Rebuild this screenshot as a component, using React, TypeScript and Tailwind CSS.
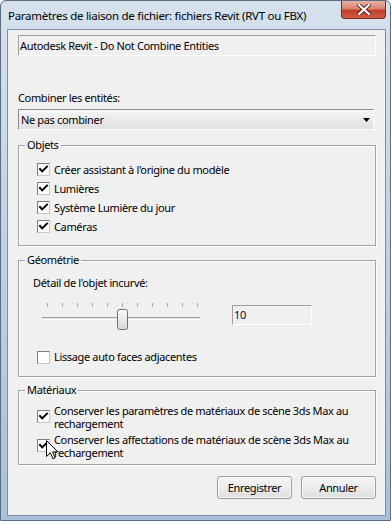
import React from "react";

function CheckMark() {
  return (
    <svg width="11" height="11" viewBox="0 0 11 11" className="block">
      <path d="M2 5 L4.2 7.4 L9 2.6" stroke="#000" strokeWidth="2" fill="none" strokeLinecap="square" />
    </svg>
  );
}

function CheckBox({ checked }: { checked: boolean }) {
  return (
    <div className="w-[13px] h-[13px] shrink-0 bg-white border border-t-[#7f7f7f] border-l-[#7f7f7f] border-r-[#c8c8c8] border-b-[#c8c8c8] flex items-center justify-center">
      {checked && <CheckMark />}
    </div>
  );
}

function Group({ title, className, children }: { title: string; className: string; children?: React.ReactNode }) {
  return (
    <div className={`relative border border-[#a3a3a3] shadow-[inset_1px_1px_0_#ffffff,1px_1px_0_#ffffff] ${className}`}>
      <span className="absolute left-[6px] -top-[8px] bg-[#f0f0f0] px-[2px] leading-[14px]">{title}</span>
      {children}
    </div>
  );
}

function Row({ label, checked }: { label: string; checked: boolean }) {
  return (
    <div className="h-[19px] flex items-center gap-[4px]">
      <CheckBox checked={checked} />
      <span className="leading-[14px]">{label}</span>
    </div>
  );
}

function Slider() {
  const ticks = Array.from({ length: 11 }, (_, i) => 7 + i * 15);
  return (
    <svg width="162" height="30" viewBox="0 0 162 30" className="block shrink-0">
      <defs>
        <linearGradient id="thumb" x1="0" y1="0" x2="0" y2="1">
          <stop offset="0" stopColor="#fbfbfb" />
          <stop offset="1" stopColor="#d6d6d6" />
        </linearGradient>
      </defs>
      {ticks.map((x) => (
        <rect key={x} x={x} y={2} width={1} height={4} fill="#a8a8a8" />
      ))}
      <rect x="2" y="16" width="158" height="1" fill="#a0a0a0" />
      <rect x="2" y="17" width="158" height="1" fill="#e3e3e3" />
      <rect x="2" y="18" width="158" height="1" fill="#ffffff" />
      <rect x="77.5" y="8.5" width="10" height="20" rx="2" fill="url(#thumb)" stroke="#707070" />
    </svg>
  );
}

function Button({ label }: { label: string }) {
  return (
    <div className="w-[75px] h-[23px] rounded-[3px] border border-[#9c9c9c] bg-gradient-to-b from-[#f4f4f4] via-[#ececec] to-[#dedede] shadow-[inset_0_0_0_1px_#fbfbfb] flex items-center justify-center leading-[14px]">
      {label}
    </div>
  );
}

function TwoLine({ first, second }: { first: string; second: string }) {
  return (
    <div className="flex flex-col">
      <div className="h-[13px] leading-[13px] whitespace-nowrap">{first}</div>
      <div className="h-[13px] leading-[13px] whitespace-nowrap">{second}</div>
    </div>
  );
}

export default function App() {
  return (
    <div className="w-[391px] h-[521px] relative overflow-hidden rounded-t-[6px] border border-[#5a6c80] bg-gradient-to-b from-[#d6e1ed] via-[#bfd0e3] to-[#a8c0da] font-['Noto_Sans',sans-serif] text-[11px] tracking-[-0.35px] text-black flex flex-col">
      {/* Title bar */}
      <div className="h-[28px] shrink-0 flex items-start justify-between">
        <div className="pl-[7px] pt-[8px] text-[11.5px] tracking-[-0.28px] leading-[14px] text-black">
          Paramètres de liaison de fichier: fichiers Revit (RVT ou FBX)
        </div>
        <div className="mr-[4px] w-[45px] h-[18px] rounded-b-[4px] border border-t-0 border-[#7a2a1e] bg-[linear-gradient(to_bottom,#e9b1a4_0%,#d98574_45%,#c2412b_55%,#cf5a42_100%)] flex items-center justify-center">
          <svg width="14" height="11" viewBox="0 0 14 11">
            <path d="M2 1 L12 10 M12 1 L2 10" stroke="#5a1a10" strokeWidth="4" strokeLinecap="square" />
            <path d="M2 1 L12 10 M12 1 L2 10" stroke="#ffffff" strokeWidth="2.2" strokeLinecap="square" />
          </svg>
        </div>
      </div>

      {/* Client area */}
      <div className="ml-[6px] w-[379px] h-[487px] shrink-0 bg-[#f0f0f0] border border-[#7d8fa5] flex flex-col pl-[10px] pr-[9px]">
        <div className="mt-[5px] h-[21px] border border-t-[#a0a0a0] border-l-[#a0a0a0] border-r-[#ffffff] border-b-[#ffffff] flex items-center pl-[1px] leading-[14px]">
          Autodesk Revit - Do Not Combine Entities
        </div>

        <div className="mt-[35px] h-[14px] leading-[14px]">Combiner les entités:</div>

        <div className="mt-[4px] mr-[2px] h-[21px] border border-t-[#8c8c8c] border-l-[#8c8c8c] border-r-[#ffffff] border-b-[#ffffff] bg-gradient-to-b from-[#f6f6f6] to-[#e0e0e0] flex items-center justify-between pl-[2px] pr-[3px] leading-[14px]">
          <span>Ne pas combiner</span>
          <svg width="7" height="4" viewBox="0 0 7 4" className="block">
            <path d="M0 0 H7 L3.5 4 Z" fill="#000" />
          </svg>
        </div>

        <Group title="Objets" className="mt-[15px] h-[101px] pl-[18px] pt-[14px]">
          <Row label="Créer assistant à l'origine du modèle" checked />
          <Row label="Lumières" checked />
          <Row label="Système Lumière du jour" checked />
          <Row label="Caméras" checked />
        </Group>

        <Group title="Géométrie" className="mt-[14px] h-[117px]">
          <div className="pl-[14px] pt-[15px] h-[14px] leading-[14px] box-content">Détail de l'objet incurvé:</div>
          <div className="mt-[11px] pl-[21px] flex items-start">
            <Slider />
            <div className="ml-[30px] mt-[4px] w-[80px] h-[20px] border border-t-[#a0a0a0] border-l-[#a0a0a0] border-r-[#ffffff] border-b-[#ffffff] flex items-center pl-[1px] leading-[14px] text-[#0a0a30]">
              10
            </div>
          </div>
          <div className="mt-[19px] pl-[18px] flex items-center gap-[4px]">
            <CheckBox checked={false} />
            <span className="leading-[14px]">Lissage auto faces adjacentes</span>
          </div>
        </Group>

        <Group title="Matériaux" className="mt-[13px] h-[75px] pl-[18px] pt-[13px]">
          <div className="flex items-start gap-[4px]">
            <div className="mt-[6px]"><CheckBox checked /></div>
            <TwoLine first="Conserver les paramètres de matériaux de scène 3ds Max au" second="rechargement" />
          </div>
          <div className="mt-[3px] flex items-start gap-[4px]">
            <div className="mt-[6px]"><CheckBox checked /></div>
            <TwoLine first="Conserver les affectations de matériaux de scène 3ds Max au" second="rechargement" />
          </div>
        </Group>

        <div className="mt-[11px] flex justify-end gap-[9px]">
          <Button label="Enregistrer" />
          <Button label="Annuler" />
        </div>
      </div>

      {/* mouse cursor */}
      <svg width="13" height="20" viewBox="0 0 13 20" className="absolute left-[45px] top-[439px]">
        <path d="M0.5 0.5 L0.5 16.5 L4.3 12.8 L7 18.8 L9.2 17.8 L6.6 11.9 L11.8 11.9 Z" fill="#ffffff" stroke="#000000" strokeWidth="1" strokeLinejoin="miter" />
      </svg>
    </div>
  );
}
